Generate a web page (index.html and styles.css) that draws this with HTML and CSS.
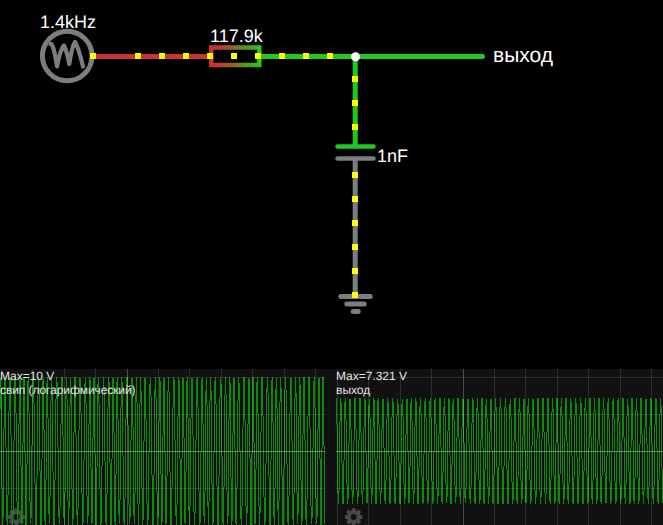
FILE: index.html
```html
<!DOCTYPE html>
<html lang="ru">
<head>
<meta charset="utf-8">
<title>Circuit</title>
<link rel="stylesheet" href="styles.css">
</head>
<body>
<main class="app">
  <svg class="circuit" width="663" height="369" viewBox="0 0 663 369">
    <defs>
      <linearGradient id="rgrad" gradientUnits="userSpaceOnUse" x1="211" y1="0" x2="260" y2="0">
        <stop offset="0" stop-color="#c83232"/>
        <stop offset="0.15" stop-color="#c83232"/>
        <stop offset="1" stop-color="#22c822"/>
      </linearGradient>
    </defs>
    <g class="wire">
      <path class="red" d="M93 56.500H211"/>
      <path class="green" d="M260 56.500H482.500"/>
      <path class="green" d="M355.200 56.500V146"/>
      <path class="green thin" d="M337.500 146.500H373.500"/>
      <path class="gray thin" d="M337.500 158.500H373.500"/>
      <path class="gray butt" d="M355.200 158V296"/>
      <path class="gray" d="M340.800 296.500H370.200"/>
      <path class="gray" d="M346.800 304H364.200"/>
      <path class="gray" d="M353.200 311.500H358.200"/>
    </g>
    <rect class="resistor" x="211.300" y="47.500" width="48" height="17.500" stroke="url(#rgrad)"/>
    <circle class="source" cx="67.200" cy="56" r="24.800"/>
    <path class="sweep" d="M50.500 44Q53.500 43 57 66.500Q60 50 64 45.500Q66.500 50 69.300 64Q72 46 75 42Q79 49 83 66.500"/>
    <circle class="node" cx="355.500" cy="56.700" r="4.500"/>
    <g class="dots">
      <rect x="90" y="53" width="6" height="6"/>
      <rect x="135" y="53" width="6" height="6"/>
      <rect x="159" y="53" width="6" height="6"/>
      <rect x="183" y="53" width="6" height="6"/>
      <rect x="207" y="53" width="6" height="6"/>
      <rect x="231" y="53" width="6" height="6"/>
      <rect x="255" y="53" width="6" height="6"/>
      <rect x="279" y="53" width="6" height="6"/>
      <rect x="303" y="53" width="6" height="6"/>
      <rect x="327" y="53" width="6" height="6"/>
      <rect x="352" y="76" width="6" height="6"/>
      <rect x="352" y="100" width="6" height="6"/>
      <rect x="352" y="124" width="6" height="6"/>
      <rect x="352" y="172" width="6" height="6"/>
      <rect x="352" y="196" width="6" height="6"/>
      <rect x="352" y="220" width="6" height="6"/>
      <rect x="352" y="244" width="6" height="6"/>
      <rect x="352" y="268" width="6" height="6"/>
      <rect x="352" y="292" width="6" height="6"/>
    </g>
    <text class="label" x="40" y="28">1.4kHz</text>
    <text class="label" x="210" y="42">117.9k</text>
    <text class="label big" x="493" y="62">выход</text>
    <text class="label" x="377" y="162">1nF</text>
  </svg>
  <section class="scopes">
    <div class="scope scope-a">
      <svg class="plot" id="plot-a" width="325" height="156" viewBox="0 0 325 156"></svg>
      <div class="info"><div>Max=10 V</div><div class="long">свип (логарифмический)</div></div>
    </div>
    <div class="scope scope-b">
      <svg class="plot" id="plot-b" width="327" height="156" viewBox="0 0 327 156"></svg>
      <div class="info"><div>Max=7.321 V</div><div>выход</div></div>
    </div>
  </section>
</main>
<script src="scope.js"></script>
</body>
</html>
```
FILE: styles.css
```css
* { box-sizing: border-box; }
html, body { margin: 0; padding: 0; background: #000; }
body { width: 663px; height: 525px; overflow: hidden; font-family: "Liberation Sans", Arial, sans-serif; text-rendering: geometricPrecision; }
.app { display: flex; flex-direction: column; width: 663px; height: 525px; }
.circuit { display: block; flex: none; }
.wire path { fill: none; stroke-width: 5; stroke-linecap: round; }
.wire .thin { stroke-width: 4.500px; }
.wire .red { stroke: #c83232; }
.wire .green { stroke: #22c822; }
.wire .gray { stroke: #7d7d7d; }
.wire .butt { stroke-linecap: butt; }
.resistor { fill: none; stroke-width: 4.500px; }
.source { fill: none; stroke: #7d7d7d; stroke-width: 5; }
.sweep { fill: none; stroke: #7d7d7d; stroke-width: 4.200px; stroke-linejoin: round; stroke-linecap: round; }
.node { fill: #fff; }
.dots rect { fill: #ffff00; }
.label { fill: #fff; font-size: 18px; font-family: "Liberation Sans", Arial, sans-serif; }
.label.big { font-size: 21px; }
.scopes { display: flex; gap: 11px; height: 156px; background: #111; }
.scope { position: relative; flex: none; height: 156px; }
.scope-a { width: 325px; }
.scope-b { width: 327px; }
.plot { display: block; }
.info { position: absolute; left: 0; top: 0; color: #e4e4e4; font-size: 12px; line-height: 14px; white-space: nowrap; }
.info .long { letter-spacing: -0.08px; }
.grid-line { stroke: rgba(255, 255, 255, 0.12); stroke-width: 1; shape-rendering: crispEdges; }
.grid-strong { stroke: rgba(255, 255, 255, 0.25); stroke-width: 1; shape-rendering: crispEdges; }
.axis-line { stroke: rgba(255, 255, 255, 0.38); stroke-width: 1; shape-rendering: crispEdges; }
.trace { fill: none; stroke: #0a8c0a; stroke-width: 1; shape-rendering: crispEdges; }
.gear { fill: #4a4a4a; }
```
FILE: scope.js
```js
var NS = "http://www.w3.org/2000/svg";

function add(svg, name, attrs) {
  var el = document.createElementNS(NS, name);
  for (var key in attrs) el.setAttribute(key, attrs[key]);
  svg.appendChild(el);
  return el;
}

function gearPath(cx, cy) {
  var d = "";
  var teeth = 8;
  for (var i = 0; i < teeth; i++) {
    var a = (i / teeth) * Math.PI * 2;
    var pts = [[6.500, -0.34], [9, -0.2], [9, 0.2], [6.500, 0.34]];
    for (var j = 0; j < pts.length; j++) {
      var r = pts[j][0], t = a + pts[j][1];
      d += (i === 0 && j === 0 ? "M" : "L") + (cx + r * Math.cos(t)).toFixed(2) + " " + (cy + r * Math.sin(t)).toFixed(2);
    }
  }
  d += "Z";
  d += "M" + (cx + 3) + " " + cy + "a3 3 0 1 0 -6 0a3 3 0 1 0 6 0Z";
  return d;
}

function drawScope(id, opts) {
  var svg = document.getElementById(id);
  var width = opts.width;
  var mid = 82;
  add(svg, "path", { "class": "gear", "fill-rule": "evenodd", d: gearPath(opts.gearX, 148) });

  function val(x) {
    var wobble = opts.wobble * Math.sin((2 * Math.PI * x) / opts.wobblePeriod);
    return Math.sin(2 * Math.PI * opts.f * x + opts.phase + wobble);
  }
  var d = "";
  for (var x = 0; x < width; x++) {
    var hi = -2, lo = 2;
    for (var s = 0; s <= 4; s++) {
      var v = val(x + s / 4);
      if (v > hi) hi = v;
      if (v < lo) lo = v;
    }
    d += "M" + (x + 0.5) + " " + (mid - hi * opts.amp).toFixed(1) + "V" + (mid - lo * opts.amp).toFixed(1);
  }
  add(svg, "path", { "class": "trace", d: d });

  for (var k = 0; k < 11; k++) {
    var gx = Math.round(1 + k * 31.4) + 0.5;
    if (gx < width) add(svg, "line", { "class": k === 4 ? "grid-strong" : "grid-line", x1: gx, y1: 0, x2: gx, y2: 156 });
  }
  [8, 45, 119].forEach(function (y) {
    add(svg, "line", { "class": "grid-line", x1: 0, y1: y + 0.5, x2: width, y2: y + 0.5 });
  });
  add(svg, "line", { "class": "axis-line", x1: 0, y1: mid + 0.5, x2: width, y2: mid + 0.5 });
}

drawScope("plot-a", { width: 325, amp: 74, f: 0.214, phase: 0.6, wobble: 0.7, wobblePeriod: 23, gearX: 16.500 });
drawScope("plot-b", { width: 327, amp: 53, f: 0.213, phase: 1.2, wobble: 0.5, wobblePeriod: 37, gearX: 17.700 });
```
